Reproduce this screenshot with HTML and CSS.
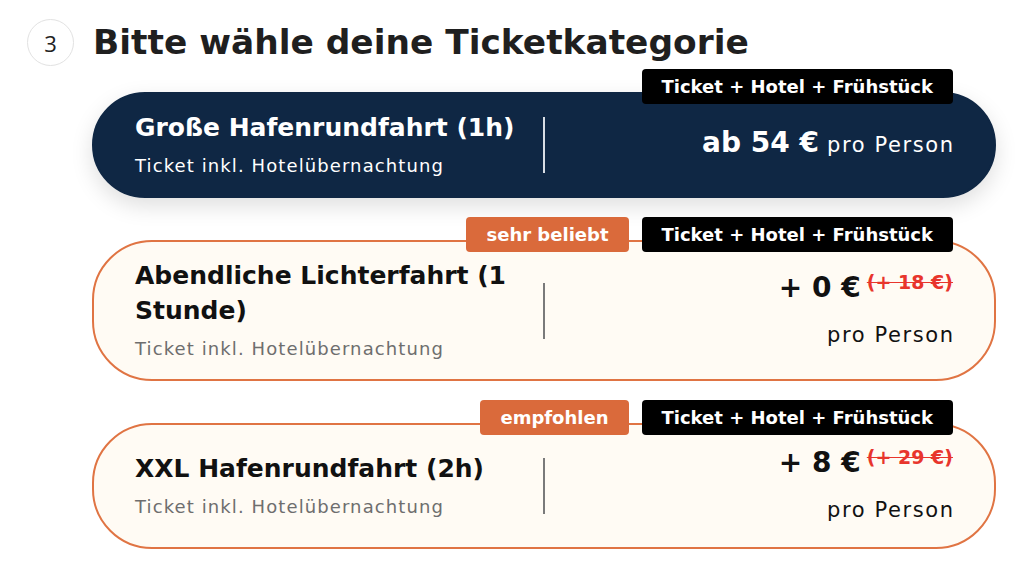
FILE: index.html
```html
<!DOCTYPE html>
<html lang="de">
<head>
<meta charset="utf-8">
<title>Ticketkategorie</title>
<link rel="stylesheet" href="styles.css">
</head>
<body>
<main class="page">
  <header class="step">
    <span class="step-num">3</span>
    <h1 class="step-title">Bitte wähle deine Ticketkategorie</h1>
  </header>

  <section class="options">
    <div class="option option--selected">
      <div class="tags">
        <span class="tag tag--black">Ticket + Hotel + Frühstück</span>
      </div>
      <div class="option-info">
        <div class="option-title">Große Hafenrundfahrt (1h)</div>
        <div class="option-sub">Ticket inkl. Hotelübernachtung</div>
      </div>
      <div class="divider"></div>
      <div class="option-price">
        <div class="price-line"><span class="price">ab 54 €</span> <span class="per">pro Person</span></div>
      </div>
    </div>

    <div class="option">
      <div class="tags">
        <span class="tag tag--orange">sehr beliebt</span>
        <span class="tag tag--black">Ticket + Hotel + Frühstück</span>
      </div>
      <div class="option-info">
        <div class="option-title">Abendliche Lichterfahrt (1 Stunde)</div>
        <div class="option-sub">Ticket inkl. Hotelübernachtung</div>
      </div>
      <div class="divider"></div>
      <div class="option-price">
        <div class="price-line"><span class="price">+ 0 €</span> <s class="old">(+ 18 €)</s></div>
        <div class="per-line">pro Person</div>
      </div>
    </div>

    <div class="option">
      <div class="tags">
        <span class="tag tag--orange">empfohlen</span>
        <span class="tag tag--black">Ticket + Hotel + Frühstück</span>
      </div>
      <div class="option-info">
        <div class="option-title">XXL Hafenrundfahrt (2h)</div>
        <div class="option-sub">Ticket inkl. Hotelübernachtung</div>
      </div>
      <div class="divider"></div>
      <div class="option-price">
        <div class="price-line"><span class="price">+ 8 €</span> <s class="old">(+ 29 €)</s></div>
        <div class="per-line">pro Person</div>
      </div>
    </div>
  </section>
</main>
</body>
</html>
```

FILE: styles.css
```css
* { box-sizing: border-box; }

body {
  margin: 0;
  background: #ffffff;
  font-family: "DejaVu Sans", "Noto Sans", sans-serif;
  color: #111111;
}

.page {
  padding: 19px 0 0 27px;
}

.step {
  display: flex;
  align-items: center;
  gap: 19px;
}

.step-num {
  width: 47px;
  height: 47px;
  flex: none;
  border: 1.5px solid #e2e2e2;
  border-radius: 50%;
  display: flex;
  align-items: center;
  justify-content: center;
  font-family: "Open Sans", sans-serif;
  font-size: 22px;
  font-weight: 400;
  color: #222;
}

.step-title {
  margin: 0;
  font-size: 34.4px;
  line-height: 47px;
  font-weight: 700;
  color: #1f1f1f;
}

.options {
  margin: 26px 0 0 65px;
  width: 904px;
  display: flex;
  flex-direction: column;
  gap: 42px;
}

.option {
  position: relative;
  display: grid;
  grid-template-columns: 1fr auto 1fr;
  align-items: center;
  padding: 16px 43px;
  border-radius: 60px;
  background: #fffbf4;
  border: 2px solid #e07443;
}

.option--selected {
  background: #0f2744;
  border-color: #0f2744;
  color: #ffffff;
  box-shadow: 0 8px 22px rgba(0, 0, 0, 0.13);
}

.tags {
  position: absolute;
  top: -25px;
  right: 41px;
  display: flex;
  gap: 13px;
}

.tag {
  height: 35px;
  padding: 0 20px;
  border-radius: 4px;
  display: flex;
  align-items: center;
  font-size: 18px;
  font-weight: 700;
  color: #ffffff;
}

.tag--black { background: #000000; }
.tag--orange { background: #da6a3b; }

.option-info {
  padding-right: 14px;
  margin-left: -2px;
}

.option-title {
  font-size: 25px;
  font-weight: 700;
  line-height: 35px;
}

.option-sub {
  font-size: 18px;
  line-height: 29px;
  margin-top: 6px;
  letter-spacing: 1.1px;
  color: #6e6e6e;
}

.option--selected .option-sub { color: #ffffff; }

.divider {
  width: 1.5px;
  height: 56px;
  background: #7a7a7a;
}

.option--selected .divider { background: #d8dde4; }

.option-price {
  text-align: right;
  margin-right: -2px;
}

.price-line {
  line-height: 44px;
}

.price {
  font-size: 28px;
  font-weight: 700;
}

.per {
  font-size: 21px;
  font-weight: 400;
  letter-spacing: 1.6px;
  margin-left: 3px;
  margin-right: -1.6px;
}

.old {
  font-size: 19px;
  font-weight: 700;
  line-height: 1;
  color: #e8352c;
  vertical-align: 8px;
  margin-left: 1px;
}

.per-line {
  font-size: 21px;
  line-height: 42px;
  letter-spacing: 1.6px;
  margin-right: -1.6px;
}
```
